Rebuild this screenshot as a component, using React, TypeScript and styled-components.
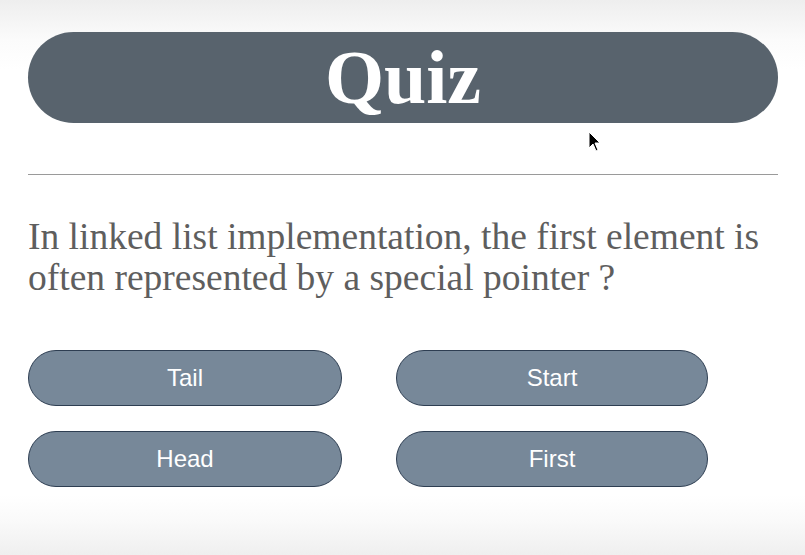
import React from 'react';
import styled, { createGlobalStyle } from 'styled-components';

const GlobalStyle = createGlobalStyle`
  html, body {
    margin: 0;
    padding: 0;
  }
  body {
    min-height: 555px;
    background: linear-gradient(
      to bottom,
      #eeeeee 0px,
      #fbfbfb 40px,
      #ffffff 70px,
      #ffffff 495px,
      #fafafa 520px,
      #efefef 555px
    );
    overflow: hidden;
  }
`;

const Page = styled.div`
  position: relative;
  width: 750px;
  padding: 32px 0 0 28px;
  display: flex;
  flex-direction: column;
`;

const TitleBar = styled.h1`
  margin: 0;
  height: 91px;
  border-radius: 46px;
  background: #58636d;
  color: #ffffff;
  font-family: 'Liberation Serif', 'Times New Roman', serif;
  font-weight: 700;
  font-size: 76px;
  line-height: 91px;
  text-align: center;
`;

const Divider = styled.hr`
  margin: 51px 0 0;
  border: none;
  border-top: 1px solid #9a9a9a;
  height: 0;
`;

const Question = styled.p`
  margin: 41px 0 0;
  font-family: 'Liberation Serif', 'Times New Roman', serif;
  font-size: 37.5px;
  line-height: 41px;
  color: #5e5e5e;
`;

const Answers = styled.div`
  margin-top: 52px;
  display: grid;
  grid-template-columns: 314px 312px;
  column-gap: 54px;
  row-gap: 25px;
`;

const AnswerButton = styled.button`
  height: 56px;
  border-radius: 28px;
  border: 1px solid #2e3e52;
  background: #778899;
  color: #ffffff;
  font-family: 'Liberation Sans', Arial, sans-serif;
  font-size: 24px;
  cursor: pointer;
  padding: 0;
`;

const Pointer = styled.svg`
  position: absolute;
  left: 588px;
  top: 131px;
`;

const answers = ['Tail', 'Start', 'Head', 'First'];

export default function App() {
  return (
    <>
      <GlobalStyle />
      <Page>
        <TitleBar>Quiz</TitleBar>
        <Divider />
        <Question>
          In linked list implementation, the first element is often represented by a special pointer ?
        </Question>
        <Answers>
          {answers.map((a) => (
            <AnswerButton key={a}>{a}</AnswerButton>
          ))}
        </Answers>
        <Pointer width="14" height="22" viewBox="0 0 14 22">
          <path d="M1 1 L1 17 L5 13 L8 20 L10 19 L7 12 L12 12 Z" fill="#000" stroke="#fff" strokeWidth="1" />
        </Pointer>
      </Page>
    </>
  );
}
